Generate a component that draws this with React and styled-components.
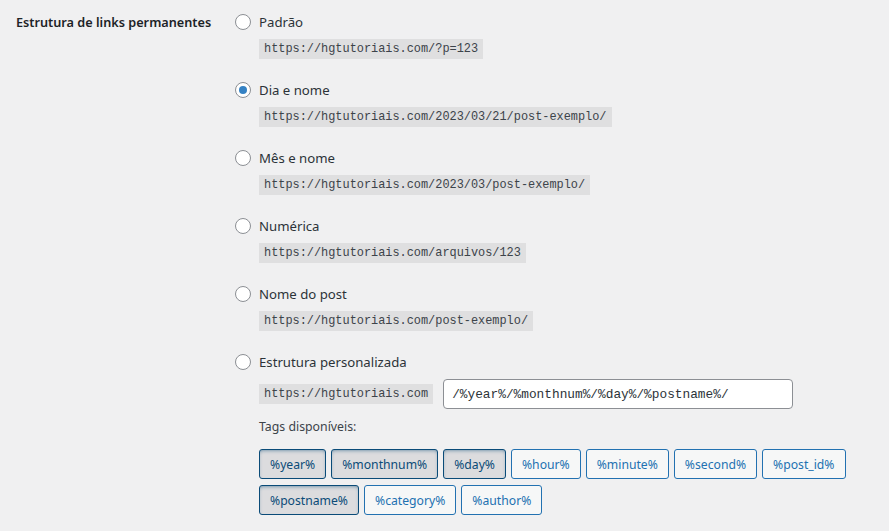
import React from "react";
import styled, { createGlobalStyle, css } from "styled-components";

const Global = createGlobalStyle`
  html, body { margin: 0; padding: 0; background: #f0f0f1; }
  body { font-family: "Noto Sans", sans-serif; color: #3c434a; }
`;

const Page = styled.div`
  display: flex;
  padding: 12px 0 0 16px;
  width: 889px;
  height: 531px;
  box-sizing: border-box;
  overflow: hidden;
`;

const Th = styled.div`
  width: 219px;
  flex: none;
  font-size: 12.7px;
  font-weight: 600;
  line-height: 20px;
  color: #1d2327;
`;

const Td = styled.div`
  display: flex;
  flex-direction: column;
  gap: 21px;
`;

const Option = styled.div`
  display: flex;
  flex-direction: column;
  gap: 7px;
  align-items: flex-start;
`;

const LabelRow = styled.label`
  display: flex;
  align-items: center;
  gap: 8px;
  font-size: 13.2px;
  line-height: 20px;
  color: #2c3338;
`;

const Radio = styled.span`
  width: 16px;
  height: 16px;
  box-sizing: border-box;
  border-radius: 50%;
  border: 1px solid #8c8f94;
  background: #fff;
  display: flex;
  align-items: center;
  justify-content: center;
  ${(p) =>
    p.$checked &&
    css`
      &::after {
        content: "";
        width: 8px;
        height: 8px;
        border-radius: 50%;
        background: #3582c4;
      }
    `}
`;

const Code = styled.code`
  margin-left: 24px;
  display: inline-block;
  font-family: "Liberation Mono", monospace;
  font-size: 11.9px;
  line-height: 20px;
  padding: 0 5px;
  background: rgba(0, 0, 0, 0.07);
  color: #3c434a;
`;

const CustomRow = styled.div`
  margin-left: 24px;
  display: flex;
  align-items: center;
  gap: 10px;
`;

const CodeInline = styled(Code)`
  margin-left: 0;
`;

const Input = styled.div`
  width: 350px;
  height: 30px;
  box-sizing: border-box;
  border: 1px solid #8c8f94;
  border-radius: 4px;
  background: #fff;
  padding: 0 8px;
  display: flex;
  align-items: center;
  font-family: "Liberation Mono", monospace;
  font-size: 12.8px;
  color: #2c3338;
`;

const TagsBlock = styled.div`
  margin-left: 24px;
  margin-top: 1px;
  display: flex;
  flex-direction: column;
`;

const TagsTitle = styled.div`
  font-size: 12.3px;
  line-height: 20px;
  color: #3c434a;
`;

const TagList = styled.ul`
  list-style: none;
  margin: 12px 0 0;
  padding: 0;
  display: flex;
  flex-wrap: wrap;
  gap: 6px 5px;
  width: 600px;
`;

const Tag = styled.li`
  height: 30px;
  box-sizing: border-box;
  padding: 0 10px;
  border-radius: 3px;
  border: 1px solid #2271b1;
  background: #f6f7f7;
  color: #2271b1;
  font-size: 12.2px;
  display: flex;
  align-items: center;
  ${(p) =>
    p.$active &&
    css`
      background: #dcdcde;
      border-color: #0a4b78;
      color: #0a4b78;
      box-shadow: inset 0 2px 5px -3px #0a4b78;
    `}
`;

const options = [
  { label: "Padrão", code: "https://hgtutoriais.com/?p=123" },
  { label: "Dia e nome", code: "https://hgtutoriais.com/2023/03/21/post-exemplo/", checked: true },
  { label: "Mês e nome", code: "https://hgtutoriais.com/2023/03/post-exemplo/" },
  { label: "Numérica", code: "https://hgtutoriais.com/arquivos/123" },
  { label: "Nome do post", code: "https://hgtutoriais.com/post-exemplo/" },
];

const tags = [
  ["%year%", true],
  ["%monthnum%", true],
  ["%day%", true],
  ["%hour%", false],
  ["%minute%", false],
  ["%second%", false],
  ["%post_id%", false],
  ["%postname%", true],
  ["%category%", false],
  ["%author%", false],
];

export default function App() {
  return (
    <>
      <Global />
      <Page>
        <Th>Estrutura de links permanentes</Th>
        <Td>
          {options.map((o) => (
            <Option key={o.label}>
              <LabelRow>
                <Radio $checked={o.checked} />
                {o.label}
              </LabelRow>
              <Code>{o.code}</Code>
            </Option>
          ))}
          <Option>
            <LabelRow>
              <Radio />
              Estrutura personalizada
            </LabelRow>
            <CustomRow>
              <CodeInline>https://hgtutoriais.com</CodeInline>
              <Input>/%year%/%monthnum%/%day%/%postname%/</Input>
            </CustomRow>
            <TagsBlock>
              <TagsTitle>Tags disponíveis:</TagsTitle>
              <TagList>
                {tags.map(([t, a]) => (
                  <Tag key={t} $active={a}>
                    {t}
                  </Tag>
                ))}
              </TagList>
            </TagsBlock>
          </Option>
        </Td>
      </Page>
    </>
  );
}
